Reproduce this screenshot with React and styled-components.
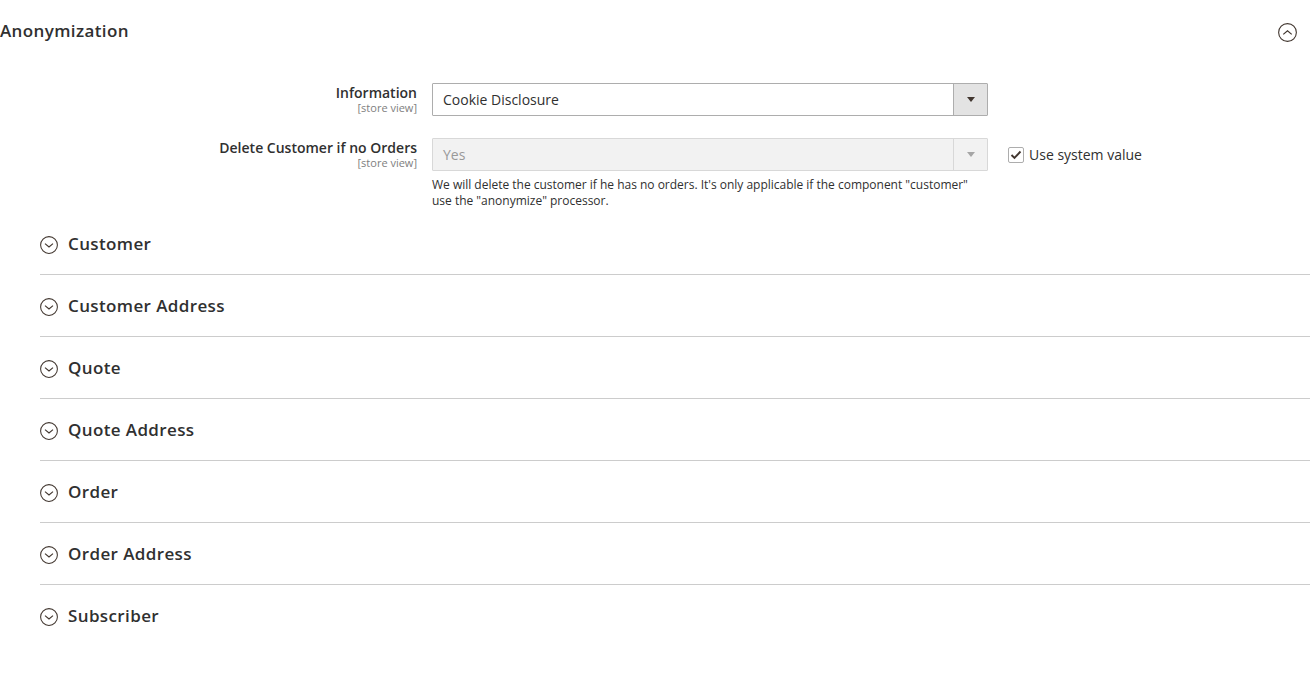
import React from "react";
import styled, { createGlobalStyle } from "styled-components";

const Global = createGlobalStyle`
  html, body { margin: 0; padding: 0; background: #fff; }
  body { font-family: "Open Sans", sans-serif; color: #303030; overflow: hidden; }
`;
const Page = styled.div`
  width: 1310px;
  height: 681px;
  display: flex;
  flex-direction: column;
`;
const Header = styled.div`
  height: 62px;
  display: flex;
  align-items: center;
  justify-content: space-between;
  padding-right: 13px;
  box-sizing: border-box;
  margin-bottom: 21px;
`;
const Heading = styled.span`
  font-size: 17px;
  font-weight: 600;
  letter-spacing: 0.38px;
  line-height: 24px;
  color: #303030;
`;
const Form = styled.div`
  display: flex;
  flex-direction: column;
  gap: 22px;
`;
const Row = styled.div`
  display: grid;
  grid-template-columns: 417px 556px auto;
  column-gap: 15px;
  align-items: start;
`;
const LabelBox = styled.div`
  text-align: right;
  padding-top: 1px;
`;
const Label = styled.div`
  font-size: 14px;
  font-weight: 600;
  line-height: 18px;
  color: #303030;
`;
const Scope = styled.div`
  font-size: 11px;
  line-height: 12px;
  color: #808080;
`;
const SelectBox = styled.div`
  height: 33px;
  box-sizing: border-box;
  border: 1px solid ${(p) => (p.$disabled ? "#d8d8d8" : "#adadad")};
  border-radius: 1px;
  background: ${(p) => (p.$disabled ? "#f2f2f2" : "#fff")};
  display: flex;
  align-items: center;
  justify-content: space-between;
`;
const SelectText = styled.span`
  font-size: 14px;
  line-height: 20px;
  padding-left: 10px;
  color: ${(p) => (p.$disabled ? "#999" : "#303030")};
`;
const Arrow = styled.span`
  width: 34px;
  height: 100%;
  box-sizing: border-box;
  border-left: 1px solid ${(p) => (p.$disabled ? "#d8d8d8" : "#adadad")};
  background: ${(p) => (p.$disabled ? "#f2f2f2" : "#e3e3e3")};
  display: flex;
  align-items: center;
  justify-content: center;
  &::after {
    content: "";
    border-style: solid;
    border-width: 5px 4px 0;
    border-color: ${(p) => (p.$disabled ? "#a6a6a6" : "#41362f")} transparent transparent;
  }
`;
const Note = styled.div`
  font-size: 12px;
  line-height: 16px;
  letter-spacing: -0.01px;
  color: #303030;
  margin-top: 6px;
`;
const Inherit = styled.label`
  display: flex;
  align-items: center;
  gap: 5px;
  height: 33px;
  margin-left: 5px;
  font-size: 14px;
  color: #303030;
`;
const Check = styled.span`
  width: 16px;
  height: 16px;
  box-sizing: border-box;
  border: 1px solid #adadad;
  border-radius: 2px;
  background: #fff;
  display: flex;
  align-items: center;
  justify-content: center;
`;
const Groups = styled.div`
  margin-top: 4px;
  padding-left: 40px;
  display: flex;
  flex-direction: column;
`;
const Group = styled.div`
  height: 62px;
  box-sizing: border-box;
  display: flex;
  align-items: center;
  gap: 10px;
  padding-top: 1px;
  border-bottom: 1px solid ${(p) => (p.$last ? "transparent" : "#cccccc")};
`;
const CircleIcon = styled.svg`
  width: 18px;
  height: 18px;
  flex-shrink: 0;
  margin-top: 2px;
  fill: none;
  stroke: #41362f;
`;
const HeaderIcon = styled(CircleIcon)`
  width: 19px;
  height: 19px;
`;

const Chevron = ({ up }) => (
  <>
    <circle cx="9" cy="9" r="8.4" strokeWidth="1.05" />
    <path d={up ? "M5 10.8 L9 7.4 L13 10.8" : "M5 7.6 L9 11 L13 7.6"} strokeWidth="1.15" />
  </>
);

const groups = ["Customer", "Customer Address", "Quote", "Quote Address", "Order", "Order Address", "Subscriber"];

export default function App() {
  return (
    <Page>
      <Global />
      <Header>
        <Heading>Anonymization</Heading>
        <HeaderIcon viewBox="0 0 18 18"><Chevron up /></HeaderIcon>
      </Header>
      <Form>
        <Row>
          <LabelBox>
            <Label>Information</Label>
            <Scope>[store view]</Scope>
          </LabelBox>
          <SelectBox>
            <SelectText>Cookie Disclosure</SelectText>
            <Arrow />
          </SelectBox>
        </Row>
        <Row>
          <LabelBox>
            <Label>Delete Customer if no Orders</Label>
            <Scope>[store view]</Scope>
          </LabelBox>
          <div>
            <SelectBox $disabled>
              <SelectText $disabled>Yes</SelectText>
              <Arrow $disabled />
            </SelectBox>
            <Note>
              We will delete the customer if he has no orders. It's only applicable if the component "customer" use the "anonymize" processor.
            </Note>
          </div>
          <Inherit>
            <Check>
              <svg width="12" height="10" viewBox="0 0 12 10" fill="none" stroke="#41362f" strokeWidth="1.9">
                <path d="M1.5 5 L4.5 8 L10.5 1.5" />
              </svg>
            </Check>
            Use system value
          </Inherit>
        </Row>
      </Form>
      <Groups>
        {groups.map((g, i) => (
          <Group key={g} $last={i === groups.length - 1}>
            <CircleIcon viewBox="0 0 18 18"><Chevron /></CircleIcon>
            <Heading>{g}</Heading>
          </Group>
        ))}
      </Groups>
    </Page>
  );
}
